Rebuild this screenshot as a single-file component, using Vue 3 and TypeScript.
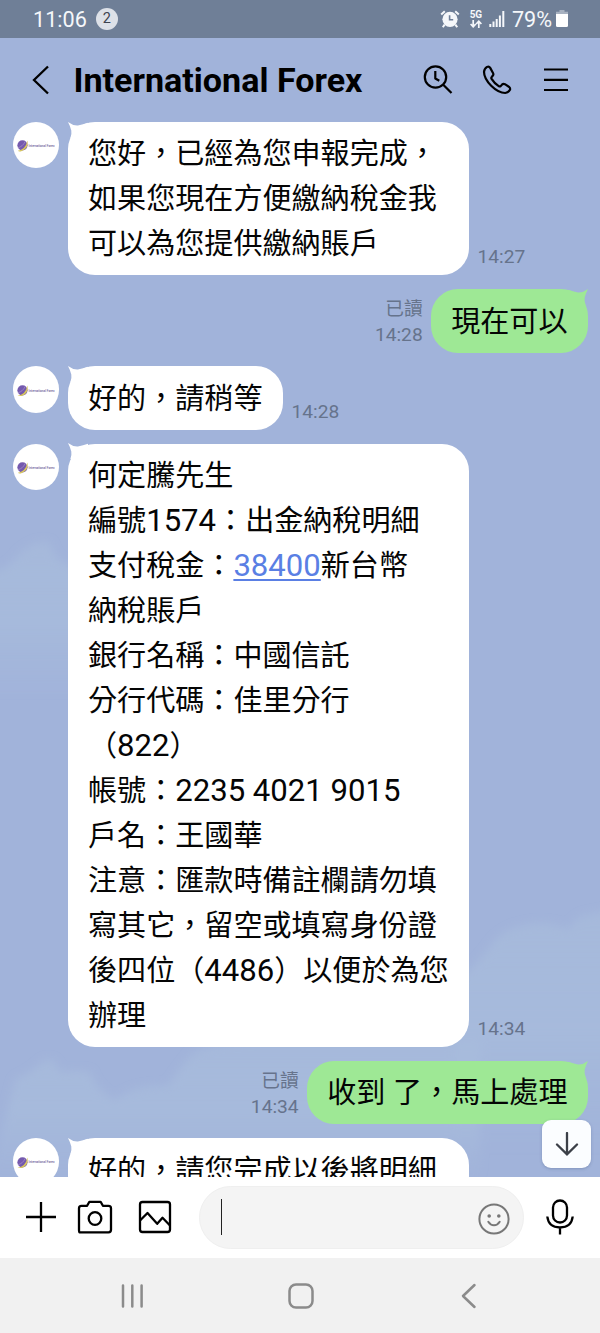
<script setup lang="ts">
interface Run { t: string; k?: 'num' | 'link' }
interface Message { mine?: boolean; time?: string; wide?: boolean; lines: Run[][] }

const line = (t: string): Run[] => [{ t }]

const messages: Message[] = [
  { time: '14:27', wide: true, lines: [line('您好，已經為您申報完成，'), line('如果您現在方便繳納稅金我'), line('可以為您提供繳納賬戶')] },
  { mine: true, time: '14:28', lines: [line('現在可以')] },
  { time: '14:28', lines: [line('好的，請稍等')] },
  {
    time: '14:34',
    wide: true,
    lines: [
      line('何定騰先生'),
      [{ t: '編號' }, { t: '1574', k: 'num' }, { t: '：出金納稅明細' }],
      [{ t: '支付稅金：' }, { t: '38400', k: 'link' }, { t: '新台幣' }],
      line('納稅賬戶'),
      line('銀行名稱：中國信託'),
      line('分行代碼：佳里分行'),
      [{ t: '（' }, { t: '822', k: 'num' }, { t: '）' }],
      [{ t: '帳號：' }, { t: '2235 4021 9015', k: 'num' }],
      line('戶名：王國華'),
      line('注意：匯款時備註欄請勿填'),
      line('寫其它，留空或填寫身份證'),
      [{ t: '後四位（' }, { t: '4486', k: 'num' }, { t: '）以便於為您' }],
      line('辦理'),
    ],
  },
  { mine: true, time: '14:34', lines: [[{ t: '收到' }, { t: ' ', k: 'num' }, { t: '了，馬上處理' }]] },
  { wide: true, lines: [line('好的，請您完成以後將明細')] },
]
</script>

<template>
  <div class="phone" lang="zh-TW">
    <svg class="sky" viewBox="0 0 600 1333" aria-hidden="true">
      <defs>
        <filter id="soft" x="-10%" y="-10%" width="120%" height="120%"><feGaussianBlur stdDeviation="4" /></filter>
        <linearGradient id="fade" x1="0" y1="0" x2="0" y2="1">
          <stop offset="0" stop-color="#a8bcdc" stop-opacity=".7" />
          <stop offset=".5" stop-color="#a7bbdc" stop-opacity=".9" />
          <stop offset="1" stop-color="#a6badc" stop-opacity="0" />
        </linearGradient>
      </defs>
      <g filter="url(#soft)" fill="url(#fade)">
        <path d="M-10 574 Q10 568 20 553 Q38 538 50 543 Q54 560 70 566 L90 575 L90 695 L-10 695Z" />
        <path d="M455 985 Q474 966 486 952 Q500 930 520 926 Q548 918 568 930 Q576 915 590 914 L610 910 L610 1150 L455 1150Z" />
        <path d="M15 1080 Q35 1070 42 1062 Q54 1054 60 1072 Q80 1070 90 1072 Q96 1090 115 1100 Q135 1084 168 1086 Q180 1068 192 1054 Q210 1042 260 1040 L480 1040 L480 1180 L-10 1180Z" />
      </g>
    </svg>

    <header class="status">
      <span class="clock">11:06</span>
      <span class="count">2</span>
      <div class="indicators">
        <svg class="alarm" viewBox="0 0 20 18">
          <circle cx="10" cy="9.3" r="7.6" fill="#f5f7fa" />
          <path d="M1.2 4.6 4.8 1.2M18.8 4.6 15.2 1.2M4.6 14.6 2.8 17.2M15.4 14.6 17.2 17.2" stroke="#f5f7fa" stroke-width="2" fill="none" />
          <path d="M9.6 5.2v4.600h3.600" stroke="#6f7f98" stroke-width="1.600" fill="none" />
        </svg>
        <span class="net">
          <span>5G</span>
          <svg viewBox="0 0 12 8"><path d="M3.200 0v6M.6 4 3.200 6.800 5.800 4M8.800 8V2M6.200 4 8.800 1.200 11.400 4" fill="none" stroke="#f5f7fa" stroke-width="1.700" /></svg>
        </span>
        <svg class="signal" viewBox="0 0 16 16"><path d="M1.300 16v-3M4.500 16v-5.500M7.700 16V8M10.900 16V4.500M14.300 16V0" stroke="#f5f7fa" stroke-width="2" /></svg>
        <span class="percent">79%</span>
        <svg class="battery" viewBox="0 0 12 17"><path d="M3.500 0h5v1.800H12V4H0V1.800h3.500z" fill="#a7b1c0" /><path d="M0 4h12v11.500q0 1.500-1.500 1.500h-9Q0 17 0 15.500z" fill="#fff" /></svg>
      </div>
    </header>

    <div class="titlebar">
      <svg class="back" viewBox="0 0 18 30"><path d="M16 1.500 2 15 16 28.500" fill="none" stroke="#000" stroke-width="2.300" /></svg>
      <h1>International Forex</h1>
      <svg class="tool search" viewBox="0 0 30 30"><circle cx="12.500" cy="12" r="10.700" /><path d="M20 19.500 28.500 28M12.300 6v7.500l4 2.300" /></svg>
      <svg class="tool call" viewBox="0 0 30 30"><path d="M5.100 1.900Q2.300 3.600 2 6.800Q2 13.500 9.200 20.800Q16.500 28 23.200 28Q26.500 27.600 28 24.800Q28.500 23.200 27.200 22L22.900 19.200Q21.300 18.300 20 19.600L18.700 21.100Q17.800 21.800 16.700 21.100Q12.300 18.300 9.600 13.900Q8.900 12.700 9.900 11.700L10.900 10.500Q11.800 9.400 11 8L8.200 2.900Q7 .9 5.100 1.900Z" /></svg>
      <svg class="tool menu" viewBox="0 0 26 26"><path d="M1 2.500h24M1 12.800h24M1 23h24" /></svg>
    </div>

    <main class="chat">
      <div v-for="(m, i) in messages" :key="i" class="row" :class="{ mine: m.mine }">
        <div v-if="!m.mine" class="avatar">
          <svg viewBox="0 0 12 12">
            <circle cx="5.700" cy="5.600" r="5.300" fill="#7459ae" />
            <path d="M.8 11.200Q9 10 10.800 .6Q12.600 8.500 4.500 11.700Q2 12.400 .8 11.200Z" fill="#d6c55c" />
            <path d="M1 8Q6 7 8.500 1.500" stroke="#a58fc8" stroke-width=".8" fill="none" />
          </svg>
          <span>International Forex</span>
        </div>
        <div v-if="m.mine" class="meta"><span class="read">已讀</span><span>{{ m.time }}</span></div>
        <div class="bubble" :class="{ wide: m.wide }">
          <svg class="tail" viewBox="0 0 20 16"><path d="M0 0Q5 3.800 10 3.400Q15 2.600 20 .8V16H2.400Q3.900 11 3.300 8.500Q2.400 4.500 0 0Z" fill="currentColor" /></svg>
          <p v-for="(l, j) in m.lines" :key="j"><span v-for="(r, k) in l" :key="k" :class="r.k">{{ r.t }}</span></p>
        </div>
        <div v-if="!m.mine && m.time" class="meta"><span>{{ m.time }}</span></div>
      </div>
      <button class="down" aria-label="down"><svg viewBox="0 0 24 24"><path d="M12 1v21M2 12.500 12 22.300 22 12.500" fill="none" stroke="#3c4048" stroke-width="2.300" stroke-linecap="round" /></svg></button>
    </main>

    <div class="composer">
      <svg class="plus" viewBox="0 0 32 32"><path d="M16 1v30M1 16h30" /></svg>
      <svg class="camera" viewBox="0 0 36 34"><path d="M4.500 5.800h5.600L12.400 1.800h11.200l2.300 4h5.600q2.500 0 2.500 2.500v21.500q0 2.500-2.500 2.500h-29Q2 32.300 2 29.800V8.300q0-2.500 2.500-2.500z" /><circle cx="18" cy="18.500" r="6.300" /></svg>
      <svg class="photo" viewBox="0 0 34 34"><rect x="2" y="2" width="30" height="30" rx="2.500" /><path d="M2 20.500 9.500 13l9.700 10.800 5.300-6L32 25.500" /></svg>
      <div class="field">
        <i class="caret"></i>
        <svg class="smile" viewBox="0 0 32 32"><circle cx="16" cy="16" r="14.600" /><path d="M10.300 18.800Q12.500 22.300 16 22.300T21.700 18.800" stroke-linecap="round" /><circle class="eye" cx="11.200" cy="13" r="1.800" /><circle class="eye" cx="20.800" cy="13" r="1.800" /></svg>
      </div>
      <svg class="mic" viewBox="0 0 28 36"><rect x="7" y="1.500" width="14" height="22" rx="7" /><path d="M1.300 17.500Q2.500 28.500 14 28.500T26.700 17.500M14 28.500V35.500" /></svg>
    </div>

    <nav class="keys">
      <svg viewBox="0 0 28 28"><path d="M4 3.500v21M13.300 3.500v21M22.600 3.500v21" /></svg>
      <svg viewBox="0 0 28 28"><rect x="2.500" y="2.500" width="23" height="23" rx="6.500" /></svg>
      <svg viewBox="0 0 28 28"><path d="M19.500 3 8 14l11.500 11" /></svg>
    </nav>
  </div>
</template>

<style>
body { margin: 0; }
</style>

<style scoped>
.phone {
  position: relative;
  display: flex;
  flex-direction: column;
  width: 600px;
  height: 1333px;
  overflow: hidden;
  background: #a1b3da;
  font-family: Roboto, "Noto Sans CJK TC", sans-serif;
  color: #000;
}
svg { display: block; flex: none; }
.sky { position: absolute; inset: 0; width: 600px; height: 1333px; }
.status, .titlebar, .chat, .composer, .keys { position: relative; box-sizing: border-box; }
.status {
  display: flex;
  align-items: center;
  height: 37.5px;
  padding: 0 32px 0 33px;
  background: #6f7f97;
  color: #f5f7fa;
}
.clock { font-size: 21.6px; line-height: 38px; margin-top: 2px; }
.count {
  width: 22px; height: 22px; margin-left: 9px;
  border-radius: 50%;
  background: #dde1e8; color: #3d4450;
  font-size: 14.5px; line-height: 22.5px; text-align: center;
}
.indicators { display: flex; align-items: center; margin-left: auto; }
.alarm { width: 20px; height: 18px; }
.net { display: flex; flex-direction: column; align-items: center; width: 14px; margin-left: 8.5px; font-size: 10px; font-weight: 700; line-height: 9px; }
.net svg { width: 12px; height: 8px; margin-top: 1px; }
.signal { width: 16px; height: 16px; margin-left: 6px; }
.percent { margin: 2px 0 0 7px; font-size: 21.6px; line-height: 38px; }
.battery { width: 12px; height: 17px; margin-left: 4px; }

.titlebar { display: flex; align-items: center; height: 84.4px; padding: 0 31px 0 32px; }
.back { width: 18px; height: 30px; }
h1 { flex: 1; margin: 1px 0 0 23.5px; font-size: 34.1px; font-weight: 700; line-height: 40px; white-space: nowrap; }
.tool { fill: none; stroke: #000; stroke-width: 2.2; stroke-linejoin: round; }
.search, .call { width: 30px; height: 30px; }
.call { margin-left: 29px; }
.menu { width: 26px; height: 26px; margin-left: 31px; }

.chat { flex: 1; min-height: 0; overflow: hidden; display: flex; flex-direction: column; gap: 13.75px; }
.row { display: flex; flex: none; align-items: flex-end; padding: 0 12px; }
.row.mine { justify-content: flex-end; }
.avatar {
  display: flex; align-items: center; align-self: flex-start;
  box-sizing: border-box; width: 46.5px; height: 46.5px; margin: 0 8.5px 0 .5px; padding-left: 4px;
  border-radius: 50%; overflow: hidden;
  background: #fff;
}
.avatar svg { width: 11.5px; height: 11.5px; margin-top: 2px; }
.avatar span { margin: 2px 0 0 .5px; color: #6d5c98; font-size: 3.1px; line-height: 6px; font-weight: 500; white-space: nowrap; }
.bubble {
  position: relative;
  padding: 7.6px 20.5px 10.9px;
  border-radius: 27px;
  background: #fff; color: #fff;
}
.wide { box-sizing: border-box; width: 401.5px; }
.tail { position: absolute; left: 0; top: -.3px; width: 20px; height: 16px; }
.bubble p {
  position: relative;
  height: 45px; margin: 0;
  color: #050505;
  font-family: "Noto Sans CJK TC", sans-serif;
  font-size: 29.08px; line-height: 45px; white-space: pre;
}
.bubble .num, .bubble .link { font-family: Roboto, sans-serif; font-size: 31.1px; line-height: 1; }
.bubble .link { color: #5a7fe4; text-decoration: underline; text-decoration-thickness: 1.5px; text-underline-offset: 3px; }
.mine .bubble { background: #9ee895; color: #9ee895; }
.mine .tail { left: auto; right: 0; transform: scaleX(-1); }
.meta { display: flex; flex-direction: column; margin: 0 8.5px 6px; color: #66738c; font-size: 19.2px; line-height: 25px; text-align: right; }
.mine .meta { margin-right: 8px; margin-bottom: 5.5px; }
.meta .read { font-size: 18.7px; }
.down {
  position: absolute; right: 9px; bottom: 9px;
  display: flex; align-items: center; justify-content: center;
  width: 49px; height: 48.5px; padding: 0; border: 0; border-radius: 9px;
  background: #fbfdff; box-shadow: 0 1px 3px rgba(60, 80, 120, .3);
}
.down svg { width: 24px; height: 24px; }

.composer { display: flex; align-items: center; height: 81px; padding: 0 25px; background: #fff; }
.composer svg { fill: none; stroke: #000; stroke-width: 2.3; stroke-linejoin: round; }
.plus { width: 32px; height: 32px; margin-top: -2px; }
.camera { width: 36px; height: 34px; margin: -2px 0 0 20px; }
.photo { width: 34px; height: 34px; margin: -2px 0 0 25px; }
.field {
  display: flex; align-items: center; justify-content: space-between;
  box-sizing: border-box; width: 325px; height: 63px; margin-left: 27px; padding: 0 13px 0 20.5px;
  border: 1px solid #efefef; border-radius: 32px; background: #f4f4f4;
}
.caret { width: 1px; height: 36px; margin-top: -2px; background: #222; }
.composer .smile { width: 32px; height: 32px; margin-top: 3px; stroke: #777; stroke-width: 2; }
.composer .eye { fill: #777; stroke: none; }
.mic { width: 28px; height: 36px; margin: -2px 0 0 21.5px; }

.keys { display: flex; align-items: center; gap: 140px; height: 75px; padding: 0 0 0 119px; background: #f1f1f1; }
.keys svg { width: 28px; height: 28px; fill: none; stroke: #8b8b8b; stroke-width: 2.5; stroke-linecap: round; stroke-linejoin: round; }
</style>
